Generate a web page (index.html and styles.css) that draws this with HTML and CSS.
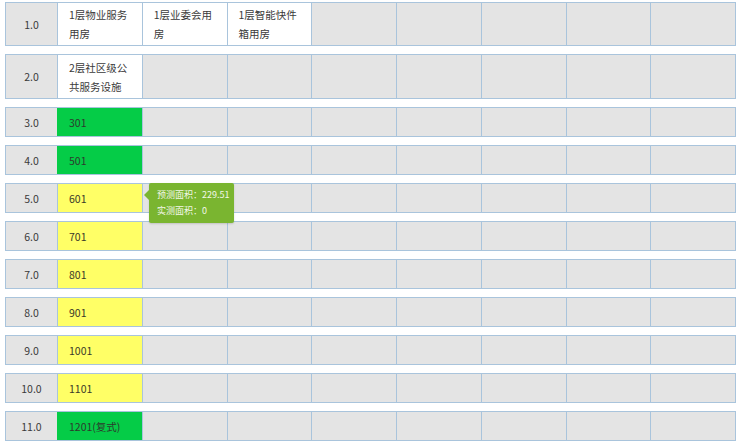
FILE: index.html
```html
<!DOCTYPE html>
<html lang="zh">
<head>
<meta charset="utf-8">
<link rel="stylesheet" href="styles.css">
</head>
<body>
<div class="table">
  <div class="row tall">
    <div class="cell label">1.0</div>
    <div class="cell white">1层物业服务用房</div>
    <div class="cell white">1层业委会用房</div>
    <div class="cell white">1层智能快件箱用房</div>
    <div class="cell"></div><div class="cell"></div><div class="cell"></div><div class="cell"></div><div class="cell"></div>
  </div>
  <div class="row tall tall2">
    <div class="cell label">2.0</div>
    <div class="cell white">2层社区级公共服务设施</div>
    <div class="cell"></div><div class="cell"></div><div class="cell"></div><div class="cell"></div><div class="cell"></div><div class="cell"></div><div class="cell"></div>
  </div>
  <div class="row">
    <div class="cell label">3.0</div>
    <div class="cell green">301</div>
    <div class="cell"></div><div class="cell"></div><div class="cell"></div><div class="cell"></div><div class="cell"></div><div class="cell"></div><div class="cell"></div>
  </div>
  <div class="row">
    <div class="cell label">4.0</div>
    <div class="cell green">501</div>
    <div class="cell"></div><div class="cell"></div><div class="cell"></div><div class="cell"></div><div class="cell"></div><div class="cell"></div><div class="cell"></div>
  </div>
  <div class="row has-tip">
    <div class="cell label">5.0</div>
    <div class="cell yellow">601</div>
    <div class="cell"></div><div class="cell"></div><div class="cell"></div><div class="cell"></div><div class="cell"></div><div class="cell"></div><div class="cell"></div>
    <div class="tooltip">
      <div>预测面积：229.51</div>
      <div>实测面积：0</div>
    </div>
  </div>
  <div class="row">
    <div class="cell label">6.0</div>
    <div class="cell yellow">701</div>
    <div class="cell"></div><div class="cell"></div><div class="cell"></div><div class="cell"></div><div class="cell"></div><div class="cell"></div><div class="cell"></div>
  </div>
  <div class="row">
    <div class="cell label">7.0</div>
    <div class="cell yellow">801</div>
    <div class="cell"></div><div class="cell"></div><div class="cell"></div><div class="cell"></div><div class="cell"></div><div class="cell"></div><div class="cell"></div>
  </div>
  <div class="row">
    <div class="cell label">8.0</div>
    <div class="cell yellow">901</div>
    <div class="cell"></div><div class="cell"></div><div class="cell"></div><div class="cell"></div><div class="cell"></div><div class="cell"></div><div class="cell"></div>
  </div>
  <div class="row">
    <div class="cell label">9.0</div>
    <div class="cell yellow">1001</div>
    <div class="cell"></div><div class="cell"></div><div class="cell"></div><div class="cell"></div><div class="cell"></div><div class="cell"></div><div class="cell"></div>
  </div>
  <div class="row">
    <div class="cell label">10.0</div>
    <div class="cell yellow">1101</div>
    <div class="cell"></div><div class="cell"></div><div class="cell"></div><div class="cell"></div><div class="cell"></div><div class="cell"></div><div class="cell"></div>
  </div>
  <div class="row">
    <div class="cell label">11.0</div>
    <div class="cell green">1201(复式)</div>
    <div class="cell"></div><div class="cell"></div><div class="cell"></div><div class="cell"></div><div class="cell"></div><div class="cell"></div><div class="cell"></div>
  </div>
</div>
</body>
</html>
```

FILE: styles.css
```css
html, body {
  margin: 0;
  padding: 0;
  background: #ffffff;
}
body {
  font-family: "Noto Sans CJK SC", "Noto Sans", sans-serif;
  font-size: 10.5px;
  color: #3a3a3a;
}
.table {
  display: flex;
  flex-direction: column;
  gap: 8px;
  padding: 2px 0 0 5px;
}
.row {
  position: relative;
  display: grid;
  grid-template-columns: 51px repeat(8, 1fr);
  height: 30px;
  width: 731px;
  box-sizing: border-box;
  border: 1px solid #a9c4dc;
  background: #e4e4e4;
}
.row.tall {
  height: 44px;
}
.row.tall2 {
  height: 45px;
}
.cell {
  border-left: 1px solid #a9c4dc;
  background: #e4e4e4;
  display: flex;
  align-items: center;
  padding-left: 11px;
  line-height: 19px;
  box-sizing: border-box;
  min-width: 0;
}
.cell.label {
  border-left: none;
  justify-content: center;
  padding-left: 0;
}
.cell.white {
  background: #ffffff;
  padding-right: 8px;
}
.cell.green {
  background: #05cc47;
  color: #2d3a2d;
  border-left-color: #05cc47;
}
.cell.yellow {
  background: #ffff66;
  color: #3a3a2a;
}
.tooltip {
  position: absolute;
  left: 143px;
  top: -1px;
  width: 85px;
  height: 40px;
  box-sizing: border-box;
  background: #7ab530;
  color: #f2f7e8;
  font-size: 9px;
  line-height: 16px;
  padding: 4px 0 0 8px;
  border-radius: 2px;
  z-index: 2;
  box-shadow: 0 1px 2px rgba(0,0,0,0.15);
}
.tooltip::before {
  content: "";
  position: absolute;
  left: -5px;
  top: 7px;
  border-top: 5px solid transparent;
  border-bottom: 5px solid transparent;
  border-right: 5px solid #7ab530;
}
```
